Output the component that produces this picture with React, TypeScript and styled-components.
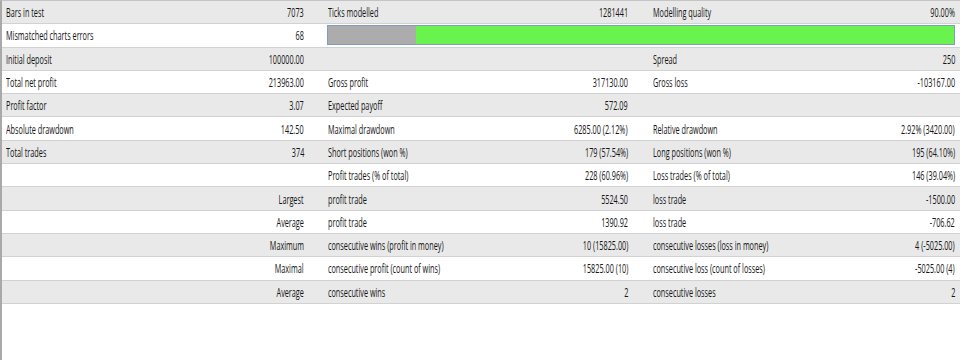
import styled, { createGlobalStyle } from 'styled-components';

type Pair = [string, string];

type Row = {
    cells?: Pair[];
    quality?: number;
}

const rows: Row[] = [
    { cells: [['Bars in test', '7073'], ['Ticks modelled', '1281441'], ['Modelling quality', '90.00%']] },
    { cells: [['Mismatched charts errors', '68']], quality: 86 },
    { cells: [['Initial deposit', '100000.00'], ['', ''], ['Spread', '250']] },
    { cells: [['Total net profit', '213963.00'], ['Gross profit', '317130.00'], ['Gross loss', '-103167.00']] },
    { cells: [['Profit factor', '3.07'], ['Expected payoff', '572.09'], ['', '']] },
    { cells: [['Absolute drawdown', '142.50'], ['Maximal drawdown', '6285.00 (2.12%)'], ['Relative drawdown', '2.92% (3420.00)']] },
    { cells: [['Total trades', '374'], ['Short positions (won %)', '179 (57.54%)'], ['Long positions (won %)', '195 (64.10%)']] },
    { cells: [['', ''], ['Profit trades (% of total)', '228 (60.96%)'], ['Loss trades (% of total)', '146 (39.04%)']] },
    { cells: [['', 'Largest'], ['profit trade', '5524.50'], ['loss trade', '-1500.00']] },
    { cells: [['', 'Average'], ['profit trade', '1390.92'], ['loss trade', '-706.62']] },
    { cells: [['', 'Maximum'], ['consecutive wins (profit in money)', '10 (15825.00)'], ['consecutive losses (loss in money)', '4 (-5025.00)']] },
    { cells: [['', 'Maximal'], ['consecutive profit (count of wins)', '15825.00 (10)'], ['consecutive loss (count of losses)', '-5025.00 (4)']] },
    { cells: [['', 'Average'], ['consecutive wins', '2'], ['consecutive losses', '2']] },
];

function App() {
    return (
        <>
            <GlobalStyle />
            <Report>
                {rows.map((row, i) => (
                    <ReportRow key={i} shaded={i % 2 === 0}>
                        {row.cells?.map(([label, value], j) => (
                            <Cell key={j}>
                                <Label>{label}</Label>
                                <Value>{value}</Value>
                            </Cell>
                        ))}
                        {/* quality bar spans the two right columns */}
                        {row.quality !== undefined && (
                            <BarCell>
                                <QualityBar>
                                    <Missing style={{ width: `${100 - row.quality}%` }} />
                                    <Modelled />
                                </QualityBar>
                            </BarCell>
                        )}
                    </ReportRow>
                ))}
            </Report>
        </>
    );
}

const GlobalStyle = createGlobalStyle`
  html, body {
    margin: 0;
    padding: 0;
    background: #ffffff;
  }
  body {
    font-family: "Open Sans", "Liberation Sans", sans-serif;
    color: #141414;
  }
`;

const Report = styled.div`
  width: 960px;
  height: 360px;
  box-sizing: border-box;
  border-left: 2px solid #a9a9a9;
  border-top: 1px solid #c4c4c4;
  background: #ffffff;
  overflow: hidden;
`;

const ReportRow = styled.div<{ shaded: boolean }>`
  display: grid;
  grid-template-columns: 314px 324px 320px;
  height: 23.3px;
  box-sizing: border-box;
  border-bottom: 1px solid #d2d2d2;
  background: ${props => props.shaded ? '#e9e9e9' : '#ffffff'};

  & > :nth-child(1) { padding: 0 12px 0 4px; }
  & > :nth-child(2) { padding: 0 12px 0 12px; }
  & > :nth-child(3) { padding: 0 5px 0 13px; }
`;

const Cell = styled.div`
  display: flex;
  justify-content: space-between;
  align-items: center;
  min-width: 0;
  white-space: nowrap;
`;

const Label = styled.span`
  display: inline-block;
  font-size: 13px;
  transform: scaleX(0.56);
  transform-origin: left center;
`;

const Value = styled.span`
  display: inline-block;
  font-size: 13px;
  transform: scaleX(0.56);
  transform-origin: right center;
`;

const BarCell = styled.div`
  grid-column: 2 / span 2;
  display: flex;
  align-items: center;
  padding: 0 5px 0 11px !important;
`;

const QualityBar = styled.div`
  display: flex;
  width: 100%;
  height: 20px;
  box-sizing: border-box;
  border: 1px solid #7f9dc4;
`;

const Missing = styled.div`
  background: #acacac;
`;

const Modelled = styled.div`
  flex: 1;
  background: #6af24e;
`;

export default App;
